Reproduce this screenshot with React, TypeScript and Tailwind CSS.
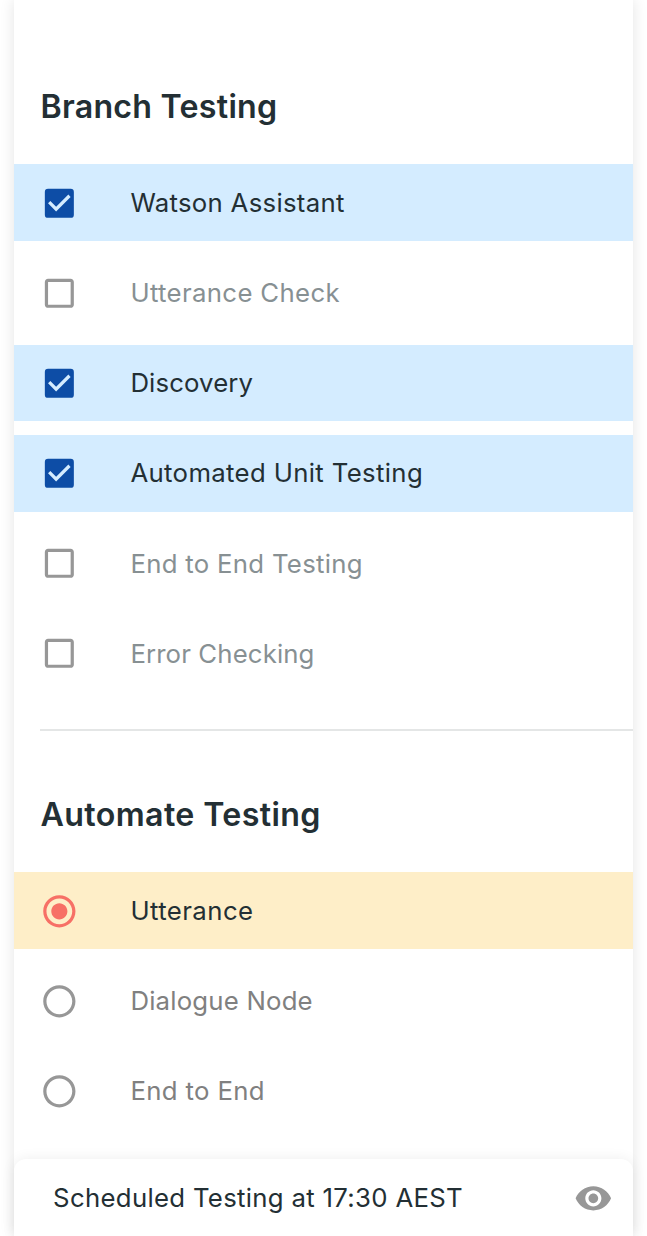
import React from "react";
import { MdCheckBox, MdCheckBoxOutlineBlank, MdRadioButtonChecked, MdRadioButtonUnchecked, MdRemoveRedEye } from "react-icons/md";

type Item = { label: string; selected: boolean; tracking?: string };

const branchItems: Item[] = [
  { label: "Watson Assistant", selected: true, tracking: "tracking-[0.29px]" },
  { label: "Utterance Check", selected: false },
  { label: "Discovery", selected: true, tracking: "tracking-[0.13px]" },
  { label: "Automated Unit Testing", selected: true },
  { label: "End to End Testing", selected: false, tracking: "tracking-[0.3px]" },
  { label: "Error Checking", selected: false, tracking: "tracking-[0.13px]" },
];

const automateItems: Item[] = [
  { label: "Utterance", selected: true, tracking: "tracking-[0.43px]" },
  { label: "Dialogue Node", selected: false, tracking: "tracking-[0.2px]" },
  { label: "End to End", selected: false },
];

const rowClass = "flex h-[76.8px] items-center gap-[51.6px] pt-[0.4px] pl-[26.1px] text-[25.75px] font-[370] leading-none";
const headingClass = "pl-[26.5px] text-[32.2px] font-semibold leading-[40px] text-[#232f34]";

function CheckRow({ label, selected, tracking = "tracking-[0.35px]" }: Item) {
  return (
    <li className={`${rowClass} ${tracking} ${selected ? "bg-[#d4ecff] text-[#232f34]" : "text-[#879093]"}`}>
      {selected ? (
        <MdCheckBox className="size-[38.7px] shrink-0 text-[#0d4da6]" />
      ) : (
        <MdCheckBoxOutlineBlank className="size-[38.7px] shrink-0 text-[#979797]" />
      )}
      <span>{label}</span>
    </li>
  );
}

function RadioRow({ label, selected, tracking = "tracking-[0.35px]" }: Item) {
  return (
    <li className={`${rowClass} ${tracking} ${selected ? "bg-[#feeec8] text-[#232f34]" : "text-[#808080]"}`}>
      {selected ? (
        <MdRadioButtonChecked className="size-[38.7px] shrink-0 text-[#f77066]" />
      ) : (
        <MdRadioButtonUnchecked className="size-[38.7px] shrink-0 text-[#979797]" />
      )}
      <span>{label}</span>
    </li>
  );
}

export default function App() {
  return (
    <div className="h-[1236px] w-[647px] overflow-hidden bg-white pl-[14px] font-['Inter',sans-serif]">
      <main className="flex h-full w-[619px] flex-col bg-white pt-[87px] shadow-[0_0_14px_rgba(0,0,0,0.11)]">
        <h2 className={`${headingClass} tracking-[0.24px]`}>Branch Testing</h2>
        <ul className="mt-[37.3px] flex flex-col gap-[13.35px]">
          {branchItems.map((item) => (
            <CheckRow key={item.label} {...item} />
          ))}
        </ul>
        <div className="mt-[37.2px] ml-[26px] h-[2px] shrink-0 bg-[#e4e6e6]" />
        <h2 className={`${headingClass} mt-[64px] tracking-[0.36px]`}>Automate Testing</h2>
        <ul className="mt-[37.3px] flex flex-col gap-[13.35px]">
          {automateItems.map((item) => (
            <RadioRow key={item.label} {...item} />
          ))}
        </ul>
        <footer className="mt-auto flex h-[77px] shrink-0 items-center justify-between rounded-t-[12px] bg-white pt-[1px] pr-[20px] pl-[39.1px] text-[25.75px] leading-none tracking-[0.31px] text-[#232f34] shadow-[0_0_14px_rgba(0,0,0,0.07)]">
          <span>Scheduled Testing at 17:30 AEST</span>
          <MdRemoveRedEye className="size-[38.7px] text-[#979797]" />
        </footer>
      </main>
    </div>
  );
}
